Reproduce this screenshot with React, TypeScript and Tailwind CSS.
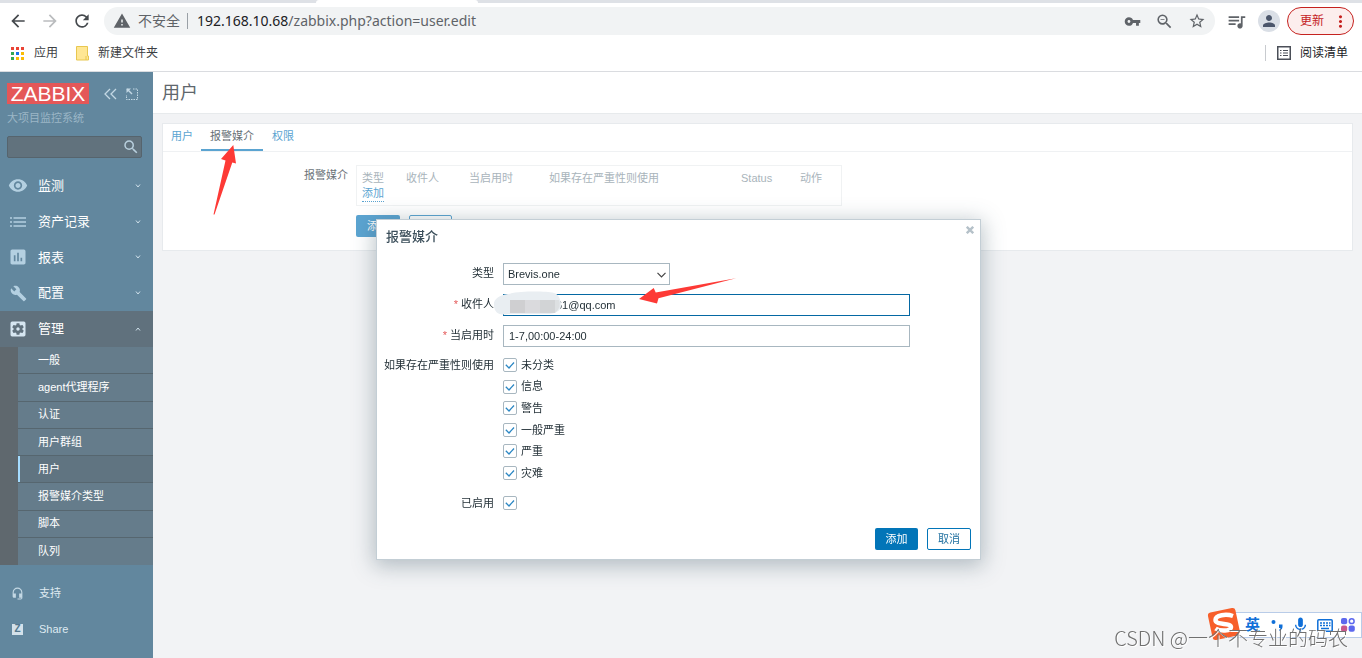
import { useState, type ReactNode } from "react";
import {
  MdArrowBack,
  MdArrowForward,
  MdAssessment,
  MdBuild,
  MdHeadsetMic,
  MdMic,
  MdMoreVert,
  MdPerson,
  MdQueueMusic,
  MdRefresh,
  MdSearch,
  MdSettingsApplications,
  MdStarBorder,
  MdVisibility,
  MdVpnKey,
  MdWarning,
  MdZoomOut,
} from "react-icons/md";

const APP_DOTS = [
  "#ea4335", "#ea4335", "#ea4335",
  "#34a853", "#1a73e8", "#fbbc04",
  "#34a853", "#fbbc04", "#fbbc04",
];

const SUBMENU = [
  "一般",
  "agent代理程序",
  "认证",
  "用户群组",
  "用户",
  "报警媒介类型",
  "脚本",
  "队列",
];

const SEVERITIES = ["未分类", "信息", "警告", "一般严重", "严重", "灾难"];

function BrowserBar() {
  return (
    <header className="border-b border-[#dadce0] bg-white font-['Noto_Sans','Noto_Sans_CJK_SC',sans-serif]">
      <div className="flex h-[3px] bg-[#dee1e6]">
        <div className="ml-[316px] w-[162px] rounded-t bg-white" />
      </div>
      <div className="flex h-9 items-center pr-2 pl-2 text-[#5f6368]">
        <button type="button" aria-label="后退" className="mr-3 text-[#45494d]">
          <MdArrowBack size={20} />
        </button>
        <button type="button" aria-label="前进" className="mr-3 text-[#babcbe]">
          <MdArrowForward size={20} />
        </button>
        <button type="button" aria-label="刷新" className="mr-3 text-[#45494d]">
          <MdRefresh size={20} />
        </button>
        <div className="flex h-7 flex-1 items-center rounded-full bg-[#f1f3f4] px-[9px] text-sm">
          <MdWarning size={18} />
          <span className="ml-[7px]">不安全</span>
          <span className="mx-[7px] h-4 w-px bg-[#9aa0a6]" />
          <span className="flex-1 pl-[2px]">
            <span className="text-[#202124]">192.168.10.68</span>/zabbix.php?action=user.edit
          </span>
          <div className="flex items-center gap-[14px]">
            <MdVpnKey size={17} />
            <MdZoomOut size={19} />
            <MdStarBorder size={18} />
          </div>
        </div>
        <MdQueueMusic size={21} className="ml-[11px]" />
        <div className="ml-[11px] flex size-[22px] items-center justify-center rounded-full bg-[#dadfe6] text-[#4b566b]">
          <MdPerson size={18} />
        </div>
        <button
          type="button"
          className="ml-[7px] flex h-7 w-[67px] items-center justify-between rounded-full border border-[#c5221f] bg-[#fceeed] pr-[3px] pl-3 text-xs text-[#c5221f]"
        >
          更新
          <MdMoreVert size={19} />
        </button>
      </div>
      <div className="mb-1 flex h-7 items-center pr-[14px] pl-[11px] text-xs text-[#3c4043]">
        <div className="grid grid-cols-3 gap-[2px]">
          {APP_DOTS.map((color, i) => (
            <span key={i} className="size-[3px]" style={{ backgroundColor: color }} />
          ))}
        </div>
        <span className="ml-[10px]">应用</span>
        <svg viewBox="0 0 13 15" className="ml-[18px] h-[15px] w-[13px]">
          <path d="M.5 .5h11v9.500h1v4H.5z" fill="#ffe794" stroke="#e8c750" />
          <path d="M10 10v4" stroke="#e8c750" />
        </svg>
        <span className="ml-[9px] flex-1">新建文件夹</span>
        <span className="mr-[11px] h-4 w-px bg-[#c8cbcf]" />
        <svg viewBox="0 0 14 14" className="size-[14px]" fill="none" stroke="#4b4f58">
          <rect x=".75" y=".75" width="12.500" height="12.500" strokeWidth="1.500" />
          <path d="M3 4.500h1.500M6 4.500h5M3 7h1.500M6 7h5M3 9.500h1.500M6 9.500h5" strokeWidth="1.200" />
        </svg>
        <span className="ml-[9px] text-[#202124]">阅读清单</span>
      </div>
    </header>
  );
}

function Chevron({ up = false }: { up?: boolean }) {
  return (
    <svg viewBox="0 0 6 4" className="h-1 w-[6px]" fill="none" stroke="#cfe0ea">
      <path d={up ? "M1 3.500L3 1l2 2.500" : "M1 .5L3 3L5 .5"} />
    </svg>
  );
}

function ListIcon() {
  return (
    <svg viewBox="0 0 16 12" className="h-3 w-4" stroke="currentColor" strokeWidth="1.500">
      <path d="M0 2h2M3.500 2H16M0 6h2M3.500 6H16M0 10h2M3.500 10H16" />
    </svg>
  );
}

function MenuRow({ icon, label, open = false }: { icon: ReactNode; label: string; open?: boolean }) {
  return (
    <a
      href="#"
      className={
        open
          ? "flex h-9 items-center bg-[#60717d] pr-3 pb-px pl-2 text-[13px] text-white"
          : "flex items-center pr-3 pl-2 text-[13px] text-white"
      }
    >
      <span className={open ? "flex w-5 justify-center text-[#d6e6f1]" : "flex w-5 justify-center text-[#b4d0e1]"}>
        {icon}
      </span>
      <span className="ml-[10px] flex-1">{label}</span>
      <Chevron up={open} />
    </a>
  );
}

function Sidebar() {
  return (
    <aside className="w-[153px] shrink-0 bg-[#62879e]">
      <div className="flex items-center pt-[11px] pl-[7px]">
        <div className="flex h-[21px] w-[82px] items-center justify-center bg-[#e45758] text-[21px] leading-none text-white">
          ZABBIX
        </div>
        <button type="button" aria-label="收起" className="ml-[15px]">
          <svg viewBox="0 0 13 12" className="h-3 w-[13px]" fill="none" stroke="#c3d8e4" strokeWidth="1.300">
            <path d="M6 1L1 6l5 5M12 1L7 6l5 5" />
          </svg>
        </button>
        <button type="button" aria-label="隐藏" className="ml-[9px]">
          <svg viewBox="0 0 12 12" className="size-3" fill="none" stroke="#c3d8e4">
            <path d="M7 1h4.500v10.500H.5V7" strokeDasharray="1.500 1" />
            <path d="M1 1l5 5" strokeWidth="1.400" />
            <path d="M.5 .5h4.500l-4.500 4.500z" fill="#c3d8e4" stroke="none" />
          </svg>
        </button>
      </div>
      <p className="mt-[5px] pl-[7px] text-[11px] leading-[18px] text-[#9bb6c6]">大项目监控系统</p>
      <div className="relative mt-[9px] mr-[11px] ml-[7px]">
        <input
          type="search"
          aria-label="搜索"
          className="block h-[22px] w-full rounded-xs border border-[#56646d] bg-[#61727d] pr-6 pl-1 text-[11px] text-white outline-none"
        />
        <MdSearch size={18} className="absolute top-[2px] right-[2px] text-[#b9d0de]" />
      </div>
      <nav className="mt-[10px]">
        <div className="grid h-[143px] auto-rows-fr">
          <MenuRow icon={<MdVisibility size={21} />} label="监测" />
          <MenuRow icon={<ListIcon />} label="资产记录" />
          <MenuRow icon={<MdAssessment size={22} />} label="报表" />
          <MenuRow icon={<MdBuild size={17} />} label="配置" />
        </div>
        <MenuRow icon={<MdSettingsApplications size={22} />} label="管理" open />
        <ul className="grid h-[218px] auto-rows-fr border-l-[18px] border-[#5f686e] bg-[#657c8b] text-[11px] text-white">
          {SUBMENU.map((item) => (
            <li key={item} className="border-b border-[#56666f] last:border-b-0">
              <a
                href="#"
                className={
                  item === "用户"
                    ? "flex h-full items-center border-l-2 border-[#a5dcff] bg-[#607481] pl-[18px]"
                    : "flex h-full items-center pl-5"
                }
              >
                {item}
              </a>
            </li>
          ))}
        </ul>
      </nav>
      <nav className="mt-[10px] text-[11px] text-[#dfeaf1]">
        <a href="#" className="flex h-9 items-center gap-[15px] pl-[11px]">
          <MdHeadsetMic size={13} className="text-[#c3d8e4]" />
          支持
        </a>
        <a href="#" className="flex h-9 items-center gap-4 pl-3">
          <span className="flex size-[11px] items-center justify-center bg-[#d3e1ea] text-[10px] leading-none font-bold text-[#54788e]">
            Z
          </span>
          Share
        </a>
      </nav>
    </aside>
  );
}

function MediaPage() {
  return (
    <main className="min-w-0 flex-1 bg-[#f2f3f5] text-[11px] text-[#6b7379]">
      <div className="flex h-[42px] items-center border-b border-[#e7eaec] bg-white pl-[9px]">
        <h1 className="text-lg text-[#5f676d]">用户</h1>
      </div>
      <section className="mt-[9px] mr-[9px] ml-[9px] border border-[#e7eaed] bg-white">
        <div className="flex h-7 border-b border-[#eff1f3] text-[#5ba4d1]">
          <a href="#" className="px-2 leading-6">用户</a>
          <a href="#" className="border-b-2 border-[#5ba4d1] px-[9px] leading-6 text-[#666f76]">报警媒介</a>
          <a href="#" className="px-[9px] leading-6">权限</a>
        </div>
        <div className="flex pt-[13px]">
          <div className="w-[185px] shrink-0 pt-px text-right leading-[18px]">报警媒介</div>
          <div className="ml-2">
            <div className="h-[41px] border border-[#f0f2f3] pt-[5px]">
              <table className="w-[484px] table-fixed text-left text-[#a9b4bb]">
                <colgroup>
                  <col className="w-[44px]" />
                  <col className="w-[63px]" />
                  <col className="w-[80px]" />
                  <col className="w-[192px]" />
                  <col className="w-[59px]" />
                  <col />
                </colgroup>
                <thead>
                  <tr className="leading-[15px]">
                    <th className="pl-[5px] font-normal">类型</th>
                    <th className="pl-[5px] font-normal">收件人</th>
                    <th className="pl-[5px] font-normal">当启用时</th>
                    <th className="pl-[5px] font-normal">如果存在严重性则使用</th>
                    <th className="pl-[5px] font-normal">Status</th>
                    <th className="pl-[5px] font-normal">动作</th>
                  </tr>
                </thead>
                <tbody>
                  <tr>
                    <td colSpan={6} className="pl-[5px] align-top leading-[15px]">
                      <button type="button" className="block border-b border-dotted border-[#5ba4d1] leading-[15px] text-[#5ba4d1]">
                        添加
                      </button>
                    </td>
                  </tr>
                </tbody>
              </table>
            </div>
            <div className="mt-[9px] mb-[13px] flex gap-[9px]">
              <button type="button" className="h-[22px] w-11 rounded-xs bg-[#5ba4d1] text-white">添加</button>
              <button type="button" className="h-[22px] w-[43px] rounded-xs border border-[#5ba4d1] text-[#5ba4d1]">取消</button>
            </div>
          </div>
        </div>
      </section>
    </main>
  );
}

function Check({ id, label }: { id: string; label?: string }) {
  return (
    <div className="flex h-[14px] items-center">
      <span className="relative size-[14px]">
        <input
          id={id}
          type="checkbox"
          defaultChecked
          className="peer block size-[14px] appearance-none rounded-xs border border-[#a8b7c0] bg-white"
        />
        <svg
          viewBox="0 0 14 14"
          className="pointer-events-none absolute inset-0 hidden size-[14px] peer-checked:block"
          fill="none"
          stroke="#2b87c4"
          strokeWidth="1.300"
        >
          <path d="M2.800 6.800l3.200 3.200L11 4.500" />
        </svg>
      </span>
      {label && <label htmlFor={id} className="pl-1">{label}</label>}
    </div>
  );
}

function MediaDialog({ onClose }: { onClose: () => void }) {
  return (
    <div className="pointer-events-none fixed inset-x-0 top-[219px] flex justify-center pr-[5px]">
      <div
        role="dialog"
        aria-labelledby="dialog-title"
        className="pointer-events-auto relative w-[605px] border border-[#c3ced5] bg-white pb-[9px] text-[11px] text-[#1f2c33] shadow-[0_4px_20px_2px_rgba(60,85,99,0.35)]"
      >
        <button
          type="button"
          aria-label="关闭"
          onClick={onClose}
          className="absolute top-[6px] right-[6px]"
        >
          <svg viewBox="0 0 8 8" className="size-2" stroke="#b5c1c9" strokeWidth="2.400">
            <path d="M.8 .8l6.400 6.400M7.200 .8L.8 7.200" />
          </svg>
        </button>
        <h2 id="dialog-title" className="pl-[9px] text-[13px] leading-[34px] font-medium text-[#3c4f5b]">
          报警媒介
        </h2>
        <div className="grid grid-cols-[117px_407px] gap-x-[9px] gap-y-[9px] pt-[9px]">
          <label htmlFor="type" className="text-right leading-[21px]">类型</label>
          <div className="relative w-[167px]">
            <select
              id="type"
              className="block h-[22px] w-full appearance-none border border-[#a8b7c0] bg-white pl-1 outline-none"
            >
              <option>Brevis.one</option>
            </select>
            <svg
              viewBox="0 0 9 6"
              className="pointer-events-none absolute top-[9px] right-1 h-[6px] w-[9px]"
              fill="none"
              stroke="#444"
              strokeWidth="1.200"
            >
              <path d="M.5 .8l4 4l4-4" />
            </svg>
          </div>

          <label htmlFor="sendto" className="text-right leading-[21px]">
            <span className="text-[#e45959]">* </span>收件人
          </label>
          <div className="relative">
            <input
              id="sendto"
              type="text"
              defaultValue="61@qq.com"
              className="block h-[22px] w-full border border-[#0568a3] pl-[52px] outline-none"
            />
            <svg viewBox="0 0 70 26" className="pointer-events-none absolute -top-[3px] -left-[10px] h-[26px] w-[70px]">
              <path
                d="M1 14C0 9 6 4 15 3C26 0 52 0 61 2C65 3 67 7 68 12C69 18 65 22 57 23H15C7 25 1 22 1 14z"
                fill="#e9eef2"
              />
              <path d="M17 9h15v13H17z" fill="#cfcfd1" />
              <path d="M32 9h15v13H32z" fill="#dadadd" />
              <path d="M47 9h15v13H47z" fill="#d2d4d6" />
              <path d="M62 9h4q3 7-4 13z" fill="#dde0e2" />
            </svg>
          </div>

          <label htmlFor="period" className="text-right leading-[21px]">
            <span className="text-[#e45959]">* </span>当启用时
          </label>
          <input
            id="period"
            type="text"
            defaultValue="1-7,00:00-24:00"
            className="block h-[22px] w-full border border-[#a8b7c0] pl-[5px] outline-none"
          />

          <div className="pt-[2px] text-right leading-[14px]">如果存在严重性则使用</div>
          <div className="flex h-[124px] flex-col justify-between pt-[2px]">
            {SEVERITIES.map((name, i) => (
              <Check key={name} id={`severity-${i}`} label={name} />
            ))}
          </div>

          <label htmlFor="enabled" className="pt-[7px] text-right leading-[14px]">已启用</label>
          <div className="pt-[7px]">
            <Check id="enabled" />
          </div>
        </div>
        <div className="mt-[18px] flex justify-end gap-[9px] pr-[9px]">
          <button type="button" className="h-[22px] w-[43px] rounded-xs bg-[#0275b8] text-white">添加</button>
          <button
            type="button"
            onClick={onClose}
            className="h-[22px] w-11 rounded-xs border border-[#0275b8] text-[#1f6f9f]"
          >
            取消
          </button>
        </div>
      </div>
    </div>
  );
}

function Arrows() {
  return (
    <>
      <svg viewBox="0 0 24 70" className="pointer-events-none fixed top-[145px] left-[213px] h-[70px] w-6">
        <path d="M20.300 0L8 14l4.500 1.500L.5 69.500h1L19.300 17.500l3.700 1z" fill="#fd3a36" />
      </svg>
      <svg viewBox="0 0 98 26" className="pointer-events-none fixed top-[278px] left-[639px] h-[26px] w-[98px]">
        <path d="M0 21L14.700 10l2 4.500L97 .2L19.500 20.300L18 25.500z" fill="#fd3a36" />
      </svg>
    </>
  );
}

function InputMethodBar() {
  return (
    <div className="fixed right-0 bottom-5 flex h-[26px] w-[136px] items-center border border-[#b9cce8] bg-white pl-[18px] text-[#0f6fd8]">
      <svg viewBox="0 0 34 34" className="absolute -top-[6px] -left-[20px] size-[34px]">
        <rect x="3" y="3" width="28" height="28" rx="3" fill="#f75f2b" transform="rotate(-12 17 17)" />
        <path
          d="M26 9C19 6.500 8.500 8 8.500 13C8.500 18.500 24 15.500 24 20C24 24.500 13 24.500 8.500 21.500"
          fill="none"
          stroke="#fff"
          strokeWidth="4.500"
        />
      </svg>
      <span className="w-[26px] text-[15px] font-bold">英</span>
      <svg viewBox="0 0 12 12" className="size-3" fill="currentColor">
        <circle cx="2.500" cy="3" r="2" />
        <path d="M8 5.500h3.500v2.500q0 2.500-2.500 4l-1-1q1.500-1 1.500-2H8z" />
      </svg>
      <MdMic size={19} className="ml-2" />
      <svg viewBox="0 0 16 13" className="ml-[7px] h-[13px] w-4" fill="none" stroke="currentColor" strokeWidth="1.500">
        <rect x=".8" y=".8" width="14.400" height="11.400" rx="1" />
        <path d="M3 4h2M6 4h2M9 4h2M12 4h1.500M3 6.500h2M6 6.500h2M9 6.500h2M12 6.500h1.500M4 9.500h8" />
      </svg>
      <svg viewBox="0 0 14 14" className="ml-2 size-[14px]" fill="#5d68ee">
        <rect width="6.200" height="6.200" rx="2" />
        <circle cx="10.700" cy="3.200" r="2.400" fill="none" stroke="#5d68ee" strokeWidth="1.500" />
        <rect y="7.600" width="6.200" height="6.200" rx="2" fill="#c8588d" />
        <rect x="7.600" y="7.600" width="6.200" height="6.200" rx="2" />
      </svg>
    </div>
  );
}

export default function App() {
  const [dialogOpen, setDialogOpen] = useState(true);

  return (
    <div className="flex min-h-screen flex-col font-['Liberation_Sans','Noto_Sans_CJK_SC',sans-serif]">
      <BrowserBar />
      <div className="flex flex-1">
        <Sidebar />
        <MediaPage />
      </div>
      {dialogOpen && <MediaDialog onClose={() => setDialogOpen(false)} />}
      <Arrows />
      <InputMethodBar />
      <p className="pointer-events-none fixed right-[14px] bottom-1 font-['Noto_Sans_CJK_SC',sans-serif] text-xl leading-8 font-light text-[#707070] [text-shadow:1px_1px_0_#fff]">
        CSDN @一个不专业的码农
      </p>
    </div>
  );
}
